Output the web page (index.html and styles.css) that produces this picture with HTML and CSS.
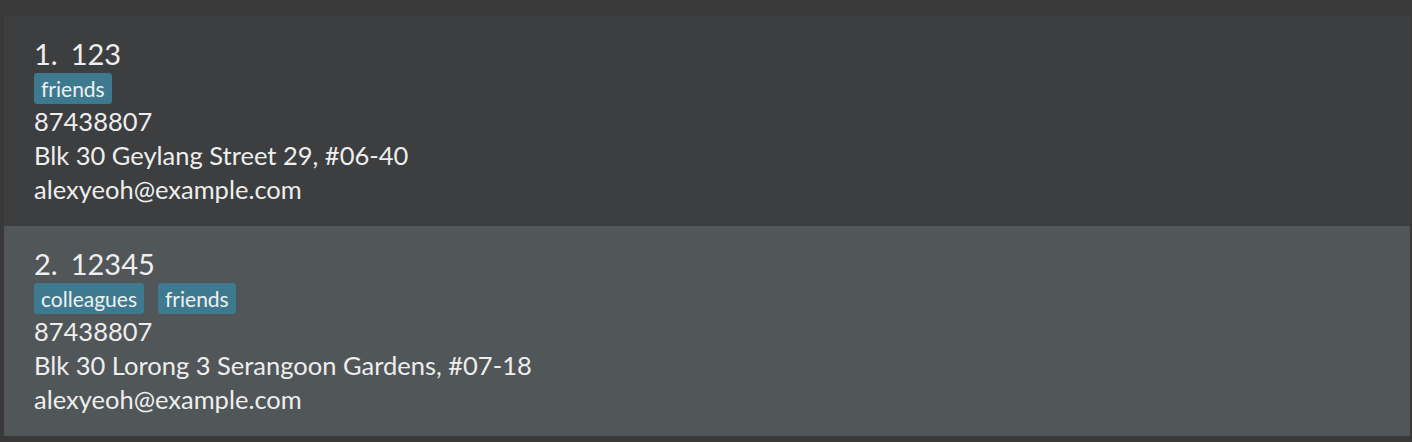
FILE: index.html
```html
<!DOCTYPE html>
<html>
<head>
<meta charset="utf-8">
<link rel="stylesheet" href="styles.css">
</head>
<body>
<div class="list">
  <div class="card odd">
    <div class="name"><span class="idx">1.</span><span>123</span></div>
    <div class="tags"><span class="tag">friends</span></div>
    <div class="line">87438807</div>
    <div class="line">Blk 30 Geylang Street 29, #06-40</div>
    <div class="line">alexyeoh@example.com</div>
  </div>
  <div class="card even">
    <div class="name"><span class="idx">2.</span><span>12345</span></div>
    <div class="tags"><span class="tag">colleagues</span><span class="tag">friends</span></div>
    <div class="line">87438807</div>
    <div class="line">Blk 30 Lorong 3 Serangoon Gardens, #07-18</div>
    <div class="line">alexyeoh@example.com</div>
  </div>
</div>
</body>
</html>
```
FILE: styles.css
```css
html, body {
  margin: 0;
  padding: 0;
  background: #393939;
  height: 100%;
  overflow: hidden;
}
body {
  font-family: Lato, "Noto Sans", sans-serif;
  color: #eeeeee;
}
.list {
  padding: 16px 2px 0 4px;
  display: flex;
  flex-direction: column;
}
.card {
  height: 210px;
  box-sizing: border-box;
  padding: 22px 30px 0 30px;
}
.odd { background: #3c3e40; }
.even { background: #515658; }
.name {
  font-size: 29px;
  line-height: 32px;
  display: flex;
  gap: 13px;
}
.tags {
  display: flex;
  gap: 14px;
  margin-top: 3px;
}
.tag {
  background: #3d7a8f;
  border-radius: 3px;
  height: 31px;
  line-height: 31px;
  padding: 0 7px;
  font-size: 21px;
  color: #f0f0f0;
}
.line {
  font-size: 25.5px;
  line-height: 34px;
}
```
